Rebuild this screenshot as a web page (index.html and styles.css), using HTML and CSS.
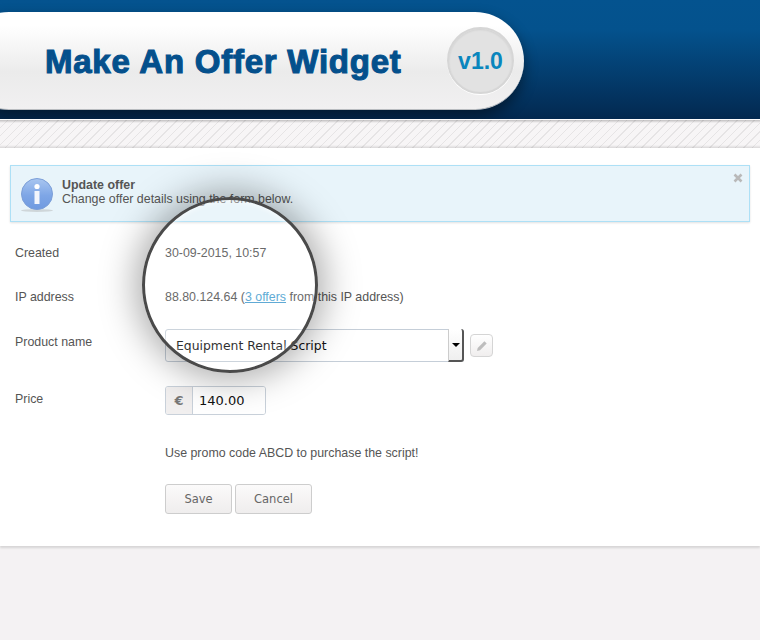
FILE: index.html
```html
<!DOCTYPE html>
<html lang="en">
<head>
  <meta charset="UTF-8" />
  <title>Make An Offer Widget</title>
  <link rel="stylesheet" href="styles.css">
</head>
<body>

  <div class="header">
    <div class="logo-pill">
      <h1>Make An Offer Widget</h1>
      <div class="version">v1.0</div>
    </div>
  </div>
  <div class="stripes"></div>

  <div class="panel">
    <div class="notice">
      <svg class="notice-icon" width="34" height="34" viewBox="0 0 34 34">
        <defs>
          <linearGradient id="infoFill" x1="0" y1="0" x2="0" y2="1">
            <stop offset="0" stop-color="#a9c6f0"/>
            <stop offset="0.55" stop-color="#7ea6e6"/>
            <stop offset="1" stop-color="#6f9ae0"/>
          </linearGradient>
        </defs>
        <ellipse cx="17" cy="32.5" rx="16" ry="1.5" fill="#cfd6d9"/>
        <circle cx="17" cy="16" r="15.5" fill="url(#infoFill)" stroke="#7c9fd8"/>
        <circle cx="17" cy="8.5" r="2.6" fill="#fff"/>
        <path d="M14.5 13h5v13h-5z" fill="#f3f6fc"/>
      </svg>
      <div class="notice-text">
        <strong>Update offer</strong>
        <span>Change offer details using the form below.</span>
      </div>
      <svg class="notice-close" width="10" height="10" viewBox="0 0 10 10">
        <path d="M1.5 1.5l7 7M8.5 1.5l-7 7" stroke="#b9b9b9" stroke-width="2.6"/>
      </svg>
    </div>

    <form class="offer-form">
      <div class="form-row row-created">
        <label>Created</label>
        <div>30-09-2015, 10:57</div>
      </div>
      <div class="form-row row-ip">
        <label>IP address</label>
        <div>88.80.124.64 (<a href="#">3 offers</a> from this IP address)</div>
      </div>
      <div class="form-row row-product">
        <label>Product name</label>
        <div class="product-field">
          <div class="select-box">
            <span>Equipment Rental Script</span>
            <span class="select-arrow"></span>
          </div>
          <button type="button" class="edit-btn">
            <svg width="14" height="14" viewBox="0 0 14 14">
              <path d="M2 12l.7-3L9.4 2.3l2.3 2.3L5 11.3z" fill="#bdbdbd"/>
            </svg>
          </button>
        </div>
      </div>
      <div class="form-row row-price">
        <label>Price</label>
        <div class="price-field">
          <span class="currency">€</span>
          <input type="text" value="140.00" />
        </div>
      </div>
      <div class="form-row row-promo">
        <label></label>
        <div>Use promo code ABCD to purchase the script!</div>
      </div>
      <div class="form-row row-actions">
        <label></label>
        <div class="actions">
          <button type="button" class="btn btn-save">Save</button>
          <button type="button" class="btn btn-cancel">Cancel</button>
        </div>
      </div>
    </form>

    <div class="lens"></div>
  </div>

</body>
</html>
```

FILE: styles.css
```css
* {
  box-sizing: border-box;
}

html, body {
  height: 100%;
}

body {
  margin: 0;
  overflow: hidden;
  font-family: "Liberation Sans", Arial, sans-serif;
  font-size: 12.4px;
  color: #555;
  background: #f4f2f3;
}

.header {
  height: 120px;
  padding-top: 12px;
  overflow: hidden;
  background: linear-gradient(to bottom, #04538f 0%, #04528d 25%, #032e58 90%, #03284f 100%);
  border-bottom: 1px solid #fff;
}

.logo-pill {
  display: flex;
  align-items: center;
  width: 564px;
  height: 98px;
  margin-left: -40px;
  padding-left: 85px;
  padding-right: 10px;
  border-radius: 49px;
  background: linear-gradient(to bottom, #fff 0%, #fff 14%, #ebebeb 62%, #f1f0f1 100%);
  border-bottom: 1px solid #b9bcc0;
  box-shadow: 0 6px 14px rgba(0, 0, 0, 0.45);
}

.logo-pill h1 {
  margin: 3px 0 0;
  font-size: 33px;
  font-weight: bold;
  letter-spacing: 0.76px;
  color: #04508c;
  -webkit-text-stroke: 1.1px #04508c;
}

.version {
  display: flex;
  align-items: center;
  justify-content: center;
  width: 67px;
  height: 67px;
  margin-left: auto;
  padding-top: 2px;
  border-radius: 50%;
  font-size: 23px;
  font-weight: bold;
  color: #0a86bd;
  background: #e2e2e2;
  border: 2px solid #d6d6d6;
  box-shadow: 0 1px 0 #fff, inset 0 1px 2px rgba(0, 0, 0, 0.08);
}

.stripes {
  height: 28px;
  background:
    linear-gradient(to bottom, rgba(0, 0, 0, 0.22), rgba(0, 0, 0, 0) 3px, rgba(0, 0, 0, 0) 25px, rgba(0, 0, 0, 0.12)),
    repeating-linear-gradient(135deg, #f7f5f6 0, #f7f5f6 5px, #e6e4e5 5px, #e6e4e5 6px);
}

.panel {
  position: relative;
  height: 398px;
  padding: 17px 10px 0;
  background: #fff;
  box-shadow: 0 2px 2px rgba(0, 0, 0, 0.12);
}

.notice {
  position: relative;
  display: flex;
  align-items: center;
  height: 57px;
  padding-left: 9px;
  background: #e8f4fa;
  border: 1px solid #ade0f6;
  box-shadow: 0 1px 2px rgba(0, 0, 0, 0.12);
}

.notice-icon {
  flex: none;
  margin-top: 3px;
}

.notice-text {
  display: flex;
  flex-direction: column;
  margin: -3px 0 0 8px;
  line-height: 14px;
}

.notice-close {
  position: absolute;
  top: 7px;
  right: 6px;
}

.offer-form {
  padding-left: 5px;
}

.form-row {
  display: grid;
  grid-template-columns: 150px 1fr;
  line-height: 14px;
}

.row-created {
  margin-top: 24px;
}

.row-ip {
  margin-top: 30px;
}

.row-product {
  margin-top: 25px;
}

.row-product label {
  padding-top: 6px;
}

.row-price {
  margin-top: 24px;
}

.row-price label {
  padding-top: 6px;
}

.row-promo {
  margin-top: 31px;
}

.row-actions {
  margin-top: 24px;
}

a {
  color: #4b9fd0;
}

.product-field {
  display: flex;
  align-items: center;
  gap: 6px;
}

.select-box {
  display: flex;
  align-items: center;
  justify-content: space-between;
  width: 299px;
  height: 33px;
  padding-left: 10px;
  font-family: "DejaVu Sans", Verdana, sans-serif;
  font-size: 12.4px;
  color: #111;
  background: #fff;
  border: 1px solid #c5ced8;
  border-radius: 3px;
}

.select-arrow {
  position: relative;
  width: 16px;
  height: 33px;
  margin-right: -1px;
  background: linear-gradient(to bottom, #fff, #efefef);
  border-left: 1px solid #ccc;
  border-right: 2px solid #555;
  border-bottom: 2px solid #555;
  border-radius: 0 3px 3px 0;
}

.select-arrow::after {
  content: "";
  position: absolute;
  top: 14px;
  left: 3px;
  border-left: 4px solid transparent;
  border-right: 4px solid transparent;
  border-top: 4px solid #000;
}

.edit-btn {
  display: flex;
  align-items: center;
  justify-content: center;
  width: 23px;
  height: 23px;
  padding: 0;
  background: linear-gradient(to bottom, #fff, #f0eeee);
  border: 1px solid #d5d5d5;
  border-radius: 4px;
}

.price-field {
  display: flex;
  width: 101px;
  height: 29px;
  background: #fff;
  border: 1px solid #c9d1da;
  border-radius: 3px;
  overflow: hidden;
}

.currency {
  width: 27px;
  line-height: 27px;
  text-align: center;
  font-family: "DejaVu Sans", Verdana, sans-serif;
  font-size: 13px;
  font-weight: bold;
  color: #777;
  background: #f1efef;
  border-right: 1px solid #c9d1da;
}

.price-field input {
  flex: 1;
  width: 70px;
  padding: 0 0 0 6px;
  border: none;
  font-family: "DejaVu Sans", Verdana, sans-serif;
  font-size: 13px;
  color: #111;
}

.actions {
  display: flex;
  gap: 3px;
}

.btn {
  height: 30px;
  padding: 0;
  font-family: "DejaVu Sans", Verdana, sans-serif;
  font-size: 11.5px;
  color: #666;
  background: linear-gradient(to bottom, #fbfafa, #efeded);
  border: 1px solid #cdcdcd;
  border-radius: 3px;
}

.btn-save {
  width: 67px;
}

.btn-cancel {
  width: 77px;
}

/* magnifier sitting over the form */
.lens {
  position: absolute;
  top: 49px;
  left: 142px;
  width: 176px;
  height: 176px;
  border: 3px solid #4a4a4a;
  border-radius: 50%;
  pointer-events: none;
  background: rgba(255, 255, 255, 0.12);
  box-shadow: 0 0 36px 6px rgba(0, 0, 0, 0.34), inset 0 0 6px rgba(255, 255, 255, 0.9);
}
```
